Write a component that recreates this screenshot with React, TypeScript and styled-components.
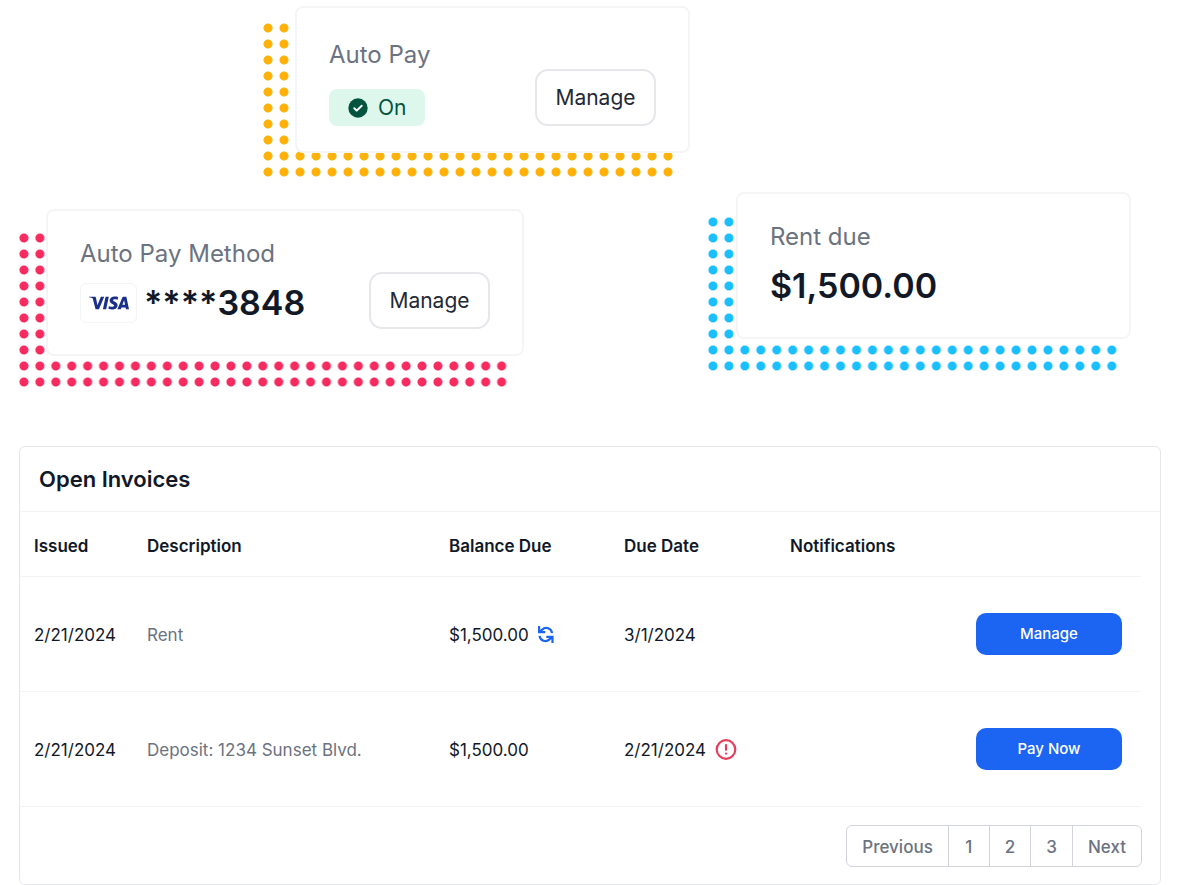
import React from "react";
import styled, { createGlobalStyle } from "styled-components";

const GlobalStyle = createGlobalStyle`
  *, *::before, *::after { box-sizing: border-box; }
  body {
    margin: 0;
    background: #fff;
    color: #111827;
    font-family: Inter, "Liberation Sans", sans-serif;
    font-size: 17px;
    line-height: 24px;
  }
  button { font: inherit; cursor: pointer; }
`;

const Page = styled.main`
  padding: 6px 0 0;
`;

const TopRow = styled.div`
  display: flex;
  padding-left: 260px;
  margin-bottom: 12px;
`;

const SplitRow = styled.div`
  display: flex;
  justify-content: space-between;
  align-items: flex-end;
  gap: 24px;
  padding: 0 49px 0 16px;
  margin-bottom: 56px;
`;

const Stack = styled.div<{ $width: number; $lift?: number }>`
  display: grid;
  flex: 0 1 ${(p) => p.$width}px;
  margin-bottom: ${(p) => p.$lift ?? 0}px;
`;

const Dots = styled.div<{ $color: string; $top: number; $right: number }>`
  grid-area: 1 / 1;
  height: 160px;
  margin-top: ${(p) => p.$top}px;
  margin-right: ${(p) => p.$right}px;
  background-image: radial-gradient(circle, ${(p) => p.$color} 4px, transparent 5px);
  background-size: 16px 16px;
  background-repeat: round;
`;

const Card = styled.section<{ $left: number }>`
  grid-area: 1 / 1;
  align-self: start;
  display: flex;
  justify-content: space-between;
  align-items: flex-end;
  min-height: 147px;
  margin-left: ${(p) => p.$left}px;
  padding: 28px 32px 25px;
  border: 2px solid #f4f5f7;
  border-radius: 8px;
  background: #fff;
`;

const Info = styled.div<{ $gap: number; $bottom?: number }>`
  display: flex;
  flex-direction: column;
  align-items: flex-start;
  gap: ${(p) => p.$gap}px;
  padding-bottom: ${(p) => p.$bottom ?? 0}px;
`;

const Label = styled.h2`
  margin: 0;
  color: #6b7280;
  font-size: 24px;
  font-weight: 400;
  line-height: 30px;
`;

const Badge = styled.span`
  display: flex;
  align-items: center;
  gap: 10px;
  height: 37px;
  padding: 0 19px;
  border-radius: 8px;
  background: #def7ec;
  color: #03543f;
  font-size: 21px;
`;

const Figure = styled.div`
  display: flex;
  align-items: center;
  gap: 7px;
  color: #111827;
  font-size: 34px;
  font-weight: 600;
  line-height: 44px;
`;

const Brand = styled.span`
  display: flex;
  align-items: center;
  justify-content: center;
  width: 57px;
  height: 40px;
  border: 1px solid #f3f4f6;
  border-radius: 6px;
`;

const OutlineButton = styled.button`
  height: 57px;
  width: 121px;
  padding: 0;
  border: 2px solid #e5e7eb;
  border-radius: 13px;
  background: #fff;
  color: #1f2937;
  font-size: 21px;
  font-weight: 400;
`;

const Panel = styled.section`
  margin: 0 19px;
  border: 1px solid #e5e7eb;
  border-radius: 6px;
  background: #fff;
`;

const PanelTitle = styled.h2`
  margin: 0;
  padding: 20px 19px 19px;
  border-bottom: 1px solid #f3f4f6;
  font-size: 22px;
  font-weight: 600;
  line-height: 25px;
`;

const TableWrap = styled.div`
  padding-right: 19px;
`;

const Table = styled.table`
  width: 100%;
  table-layout: fixed;
  border-collapse: separate;
  border-spacing: 0;
`;

const Col = styled.col<{ $width?: number }>`
  width: ${(p) => (p.$width ? `${p.$width}px` : "auto")};
`;

const HeadCell = styled.th`
  height: 65px;
  padding: 3px 0 0 14px;
  border-bottom: 1px solid #f3f4f6;
  font-weight: 600;
  text-align: left;
`;

const Cell = styled.td<{ $muted?: boolean }>`
  height: 115px;
  padding: 2px 0 0 14px;
  border-bottom: 1px solid #f3f4f6;
  color: ${(p) => (p.$muted ? "#6b7280" : "#111827")};
`;

const ActionCell = styled(Cell)`
  padding: 0 19px 0 14px;
`;

const WithIcon = styled.span`
  display: flex;
  align-items: center;
  gap: 9px;
`;

const PrimaryButton = styled.button`
  display: block;
  width: 100%;
  height: 42px;
  border: 0;
  border-radius: 10px;
  background: #1c64f2;
  color: #fff;
  font-size: 15px;
  font-weight: 500;
`;

const Pager = styled.nav`
  display: flex;
  justify-content: flex-end;
  padding: 18px 18px 17px;
`;

const PageButton = styled.button`
  height: 42px;
  min-width: 42px;
  margin-left: -1px;
  padding: 1px 15px 0;
  border: 1px solid #d1d5db;
  background: #fff;
  color: #6b7280;
  font-weight: 500;

  &:first-child { border-radius: 6px 0 0 6px; }
  &:last-child { border-radius: 0 6px 6px 0; }
`;

const CheckIcon = () => (
  <svg width="20" height="20" viewBox="0 0 20 20" aria-hidden="true">
    <circle cx="10" cy="10" r="9.700" fill="#03543f" />
    <path d="M6.300 10.300l2.400 2.300L13.700 7.800" fill="none" stroke="#fff" strokeWidth="2" strokeLinecap="round" strokeLinejoin="round" />
  </svg>
);

const VisaLogo = () => (
  <svg width="40" height="14" viewBox="0 0 1000 324" role="img" aria-label="Visa">
    <path
      fill="#1a2f8a"
      d="M651.19.5c-70.93 0-134.32 36.77-134.32 104.69 0 77.9 112.42 83.28 112.42 122.42 0 16.48-18.88 31.23-51.14 31.23-45.77 0-79.98-20.61-79.98-20.61l-14.64 68.55s39.41 17.41 91.73 17.41c77.55 0 138.58-38.57 138.58-107.66 0-82.32-112.89-87.54-112.89-123.86 0-12.91 15.5-27.05 47.66-27.05 36.29 0 65.89 14.99 65.89 14.99l14.33-66.2S696.61.5 651.18.5zM2.22 5.5L.5 15.49s29.84 5.46 56.72 16.36c34.61 12.49 37.07 19.77 42.9 42.35l63.51 244.83h85.14L379.93 5.5h-84.94L210.71 218.67l-34.39-180.7c-3.15-20.68-19.13-32.48-38.68-32.48zm411.87 0l-66.63 313.53h81L494.85 5.5zm451.76 0c-19.53 0-29.88 10.46-37.47 28.73L709.7 319.02h84.94l16.43-47.47h103.48l9.99 47.47h74.95L934.11 5.5zm11.05 84.71l25.18 117.65h-67.45z"
    />
  </svg>
);

const RefreshIcon = () => (
  <svg width="16" height="18" viewBox="0 0 16 18" role="img" aria-label="Recurring" fill="none" stroke="#1c64f2" strokeWidth="2.200">
    <path d="M1.100 0V6.200H7.300M1.600 5.800L4.200 3.600A5.800 5.800 0 0 1 14 7.200" />
    <path d="M14.500 17V10.800H8.300M14 11.200L11.400 13.400A5.800 5.800 0 0 1 1.600 9.800" />
  </svg>
);

const AlertIcon = () => (
  <svg width="22" height="22" viewBox="0 0 22 22" role="img" aria-label="Past due" fill="none" stroke="#e53e5c" strokeWidth="2.200" strokeLinecap="round">
    <circle cx="11" cy="10.500" r="9.300" />
    <path d="M11 6v4.800M11 14.500v.1" />
  </svg>
);

type Invoice = {
  issued: string;
  description: string;
  balance: string;
  due: string;
  recurring?: boolean;
  overdue?: boolean;
  action: string;
};

const invoices: Invoice[] = [
  { issued: "2/21/2024", description: "Rent", balance: "$1,500.00", due: "3/1/2024", recurring: true, action: "Manage" },
  { issued: "2/21/2024", description: "Deposit: 1234 Sunset Blvd.", balance: "$1,500.00", due: "2/21/2024", overdue: true, action: "Pay Now" },
];

const App: React.FC = () => (
  <>
    <GlobalStyle />
    <Page>
      <TopRow>
        <Stack $width={430}>
          <Dots $color="#ffb30a" $top={14} $right={14} />
          <Card $left={35}>
            <Info $gap={19}>
              <Label>Auto Pay</Label>
              <Badge>
                <CheckIcon />
                On
              </Badge>
            </Info>
            <OutlineButton type="button">Manage</OutlineButton>
          </Card>
        </Stack>
      </TopRow>

      <SplitRow>
        <Stack $width={508}>
          <Dots $color="#f72b60" $top={21} $right={14} />
          <Card $left={30}>
            <Info $gap={12} $bottom={4}>
              <Label>Auto Pay Method</Label>
              <Figure>
                <Brand>
                  <VisaLogo />
                </Brand>
                ****3848
              </Figure>
            </Info>
            <OutlineButton type="button">Manage</OutlineButton>
          </Card>
        </Stack>
        <Stack $width={426} $lift={16}>
          <Dots $color="#19bfff" $top={22} $right={11} />
          <Card $left={31}>
            <Info $gap={12} $bottom={4}>
              <Label>Rent due</Label>
              <Figure>$1,500.00</Figure>
            </Info>
          </Card>
        </Stack>
      </SplitRow>

      <Panel>
        <PanelTitle>Open Invoices</PanelTitle>
        <TableWrap>
          <Table>
            <colgroup>
              <Col $width={113} />
              <Col />
              <Col $width={175} />
              <Col $width={166} />
              <Col $width={186} />
              <Col $width={179} />
            </colgroup>
            <thead>
              <tr>
                <HeadCell scope="col">Issued</HeadCell>
                <HeadCell scope="col">Description</HeadCell>
                <HeadCell scope="col">Balance Due</HeadCell>
                <HeadCell scope="col">Due Date</HeadCell>
                <HeadCell scope="col">Notifications</HeadCell>
                <HeadCell as="td" />
              </tr>
            </thead>
            <tbody>
              {invoices.map((invoice) => (
                <tr key={invoice.description}>
                  <Cell>{invoice.issued}</Cell>
                  <Cell $muted>{invoice.description}</Cell>
                  <Cell>
                    <WithIcon>
                      {invoice.balance}
                      {invoice.recurring && <RefreshIcon />}
                    </WithIcon>
                  </Cell>
                  <Cell>
                    <WithIcon>
                      {invoice.due}
                      {invoice.overdue && <AlertIcon />}
                    </WithIcon>
                  </Cell>
                  <Cell />
                  <ActionCell>
                    <PrimaryButton type="button">{invoice.action}</PrimaryButton>
                  </ActionCell>
                </tr>
              ))}
            </tbody>
          </Table>
        </TableWrap>
        <Pager aria-label="Invoice pages">
          {["Previous", "1", "2", "3", "Next"].map((label) => (
            <PageButton key={label} type="button">
              {label}
            </PageButton>
          ))}
        </Pager>
      </Panel>
    </Page>
  </>
);

export default App;
